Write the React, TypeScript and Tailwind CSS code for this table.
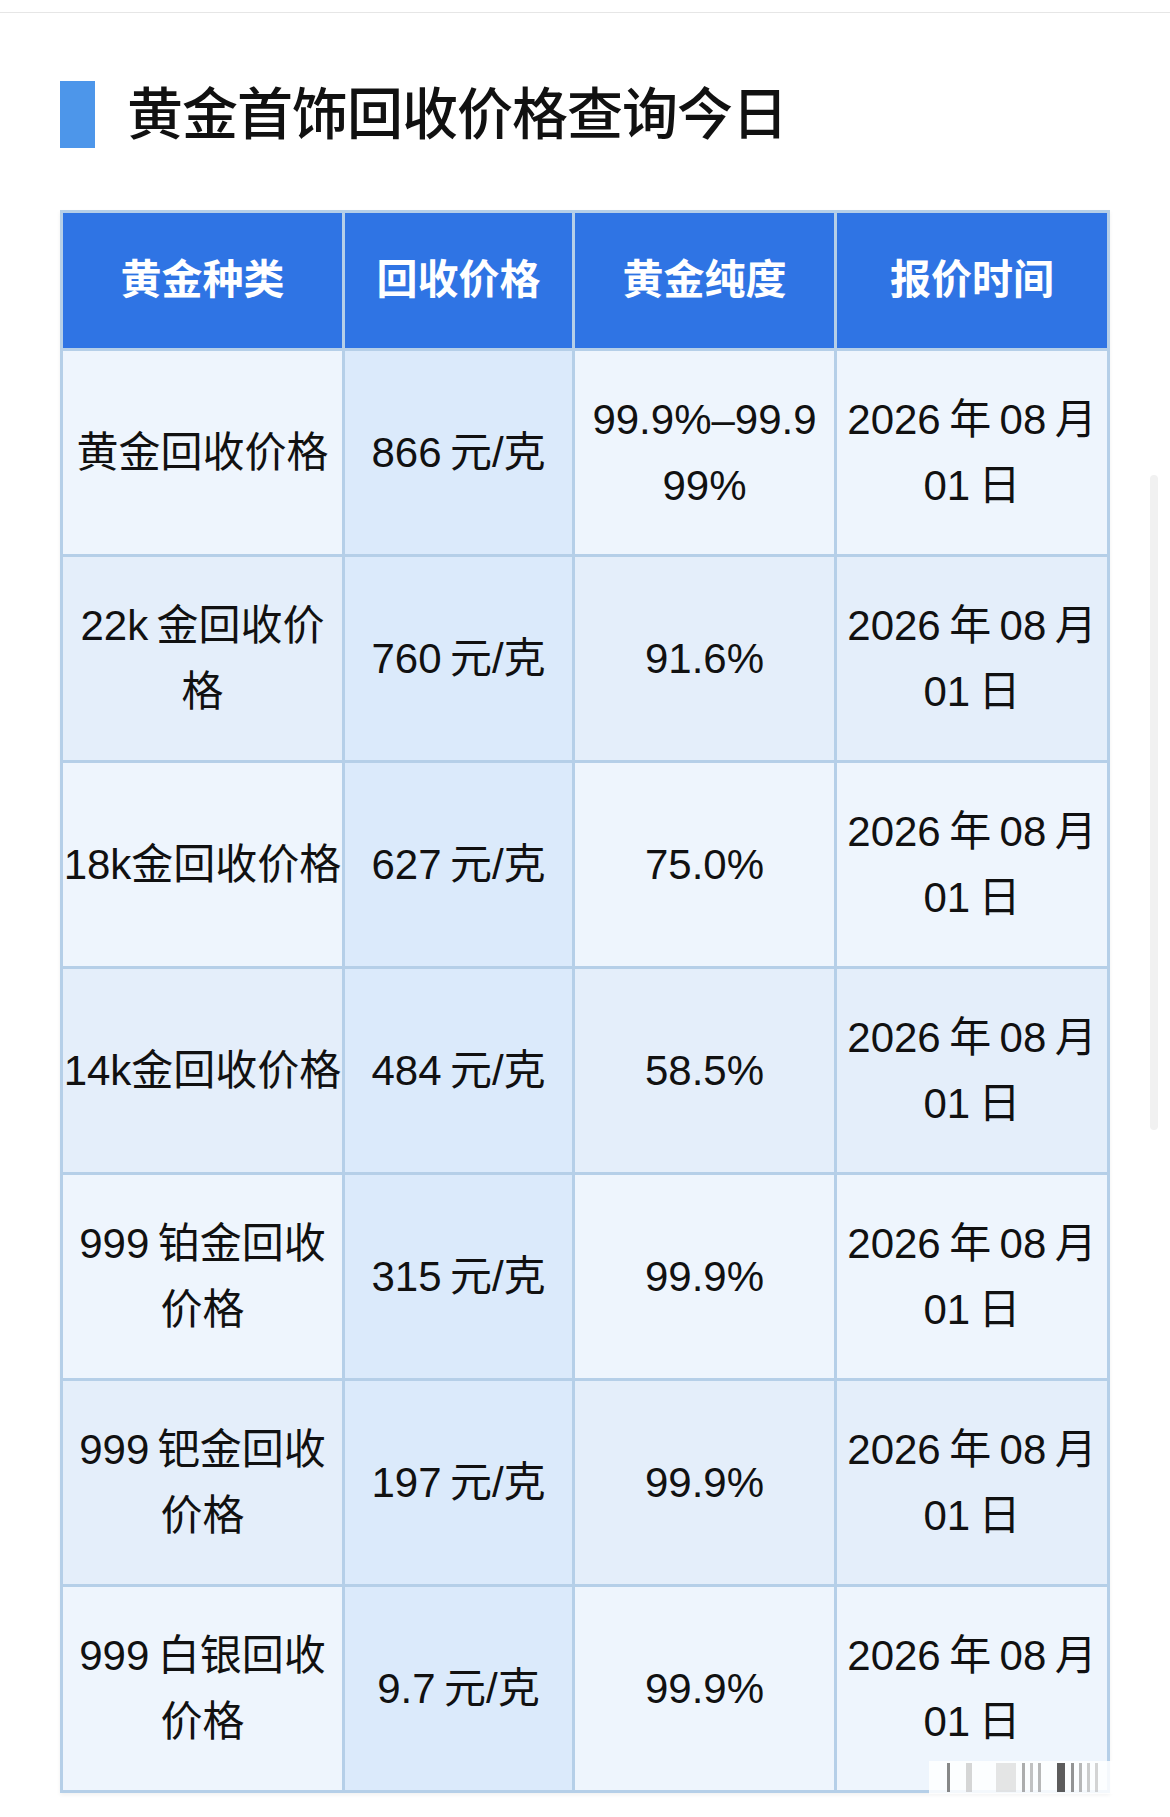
const font = "font-['Liberation_Sans','Noto_Sans_CJK_SC',sans-serif]";

const headers = ['黄金种类', '回收价格', '黄金纯度', '报价时间'];

const rows: { kind: string[]; price: string; purity: string[] }[] = [
  { kind: ['黄金回收价格'], price: '866\u2009元/克', purity: ['99.9%–99.9', '99%'] },
  { kind: ['22k\u2009金回收价', '格'], price: '760\u2009元/克', purity: ['91.6%'] },
  { kind: ['18k金回收价格'], price: '627\u2009元/克', purity: ['75.0%'] },
  { kind: ['14k金回收价格'], price: '484\u2009元/克', purity: ['58.5%'] },
  { kind: ['999\u2009铂金回收', '价格'], price: '315\u2009元/克', purity: ['99.9%'] },
  { kind: ['999\u2009钯金回收', '价格'], price: '197\u2009元/克', purity: ['99.9%'] },
  { kind: ['999\u2009白银回收', '价格'], price: '9.7\u2009元/克', purity: ['99.9%'] },
];

const date = ['2026\u2009年\u200908\u2009月', '01\u2009日'];

// faint cropped watermark in the bottom-right corner
const marks = [
  { w: 3, ml: 18, c: 'bg-[#555]/70' },
  { w: 6, ml: 16, c: 'bg-[#bbb]/60' },
  { w: 20, ml: 24, c: 'bg-[#ccc]/50' },
  { w: 3, ml: 6, c: 'bg-[#777]/60' },
  { w: 3, ml: 5, c: 'bg-[#999]/60' },
  { w: 3, ml: 5, c: 'bg-[#888]/60' },
  { w: 8, ml: 16, c: 'bg-[#333]/80' },
  { w: 3, ml: 6, c: 'bg-[#666]/70' },
  { w: 3, ml: 5, c: 'bg-[#888]/60' },
  { w: 3, ml: 5, c: 'bg-[#999]/50' },
  { w: 3, ml: 5, c: 'bg-[#aaa]/50' },
];

function Cell({ lines, bg }: { lines: string[]; bg: string }) {
  return (
    <div className={`${bg} h-[203px] flex flex-col items-center justify-center text-center text-[42px] leading-[66px] text-[#111] whitespace-nowrap`}>
      {lines.map((l, i) => (
        <span key={i}>{l}</span>
      ))}
    </div>
  );
}

export default function App() {
  return (
    <div className={`relative w-[1170px] h-[1817px] bg-white overflow-hidden ${font}`}>
      <div className="h-[13px] border-b border-[#e6e6e6]" />

      {/* Title */}
      <div className="mt-[68px] pl-[60px] flex items-center">
        <div className="w-[35px] h-[67px] bg-[#4d96ea]" />
        <h1 className="ml-[32px] text-[56px] leading-none font-medium text-[#111] tracking-[-1px]">
          黄金首饰回收价格查询今日
        </h1>
      </div>

      {/* Table */}
      <div className="mt-[62px] ml-[60px] w-[1050px] grid grid-cols-[279px_227px_259px_270px] gap-[3px] p-[3px] bg-[#b5cfe8] shadow-[0_2px_4px_rgba(0,0,0,0.06)]">
        {headers.map((h) => (
          <div key={h} className="h-[135px] bg-[#2f74e4] flex items-center justify-center text-white font-bold text-[41px]">
            {h}
          </div>
        ))}
        {rows.map((r, i) => {
          const base = i % 2 === 0 ? 'bg-[#eef5fd]' : 'bg-[#e4eefa]';
          return [
            <Cell key={`k${i}`} lines={r.kind} bg={base} />,
            <Cell key={`p${i}`} lines={[r.price]} bg="bg-[#dbeafb]" />,
            <Cell key={`u${i}`} lines={r.purity} bg={base} />,
            <Cell key={`d${i}`} lines={date} bg={base} />,
          ];
        })}
      </div>

      {/* scroll indicator */}
      <div className="absolute left-[1150px] top-[475px] w-[8px] h-[655px] rounded-full bg-[#f1f1f1]" />

      {/* watermark */}
      <div className="absolute left-[929px] top-[1761px] w-[222px] h-[33px] bg-white/85 flex items-stretch py-[2px]">
        {marks.map((m, i) => (
          <div key={i} className={m.c} style={{ width: m.w, marginLeft: m.ml }} />
        ))}
      </div>
    </div>
  );
}
